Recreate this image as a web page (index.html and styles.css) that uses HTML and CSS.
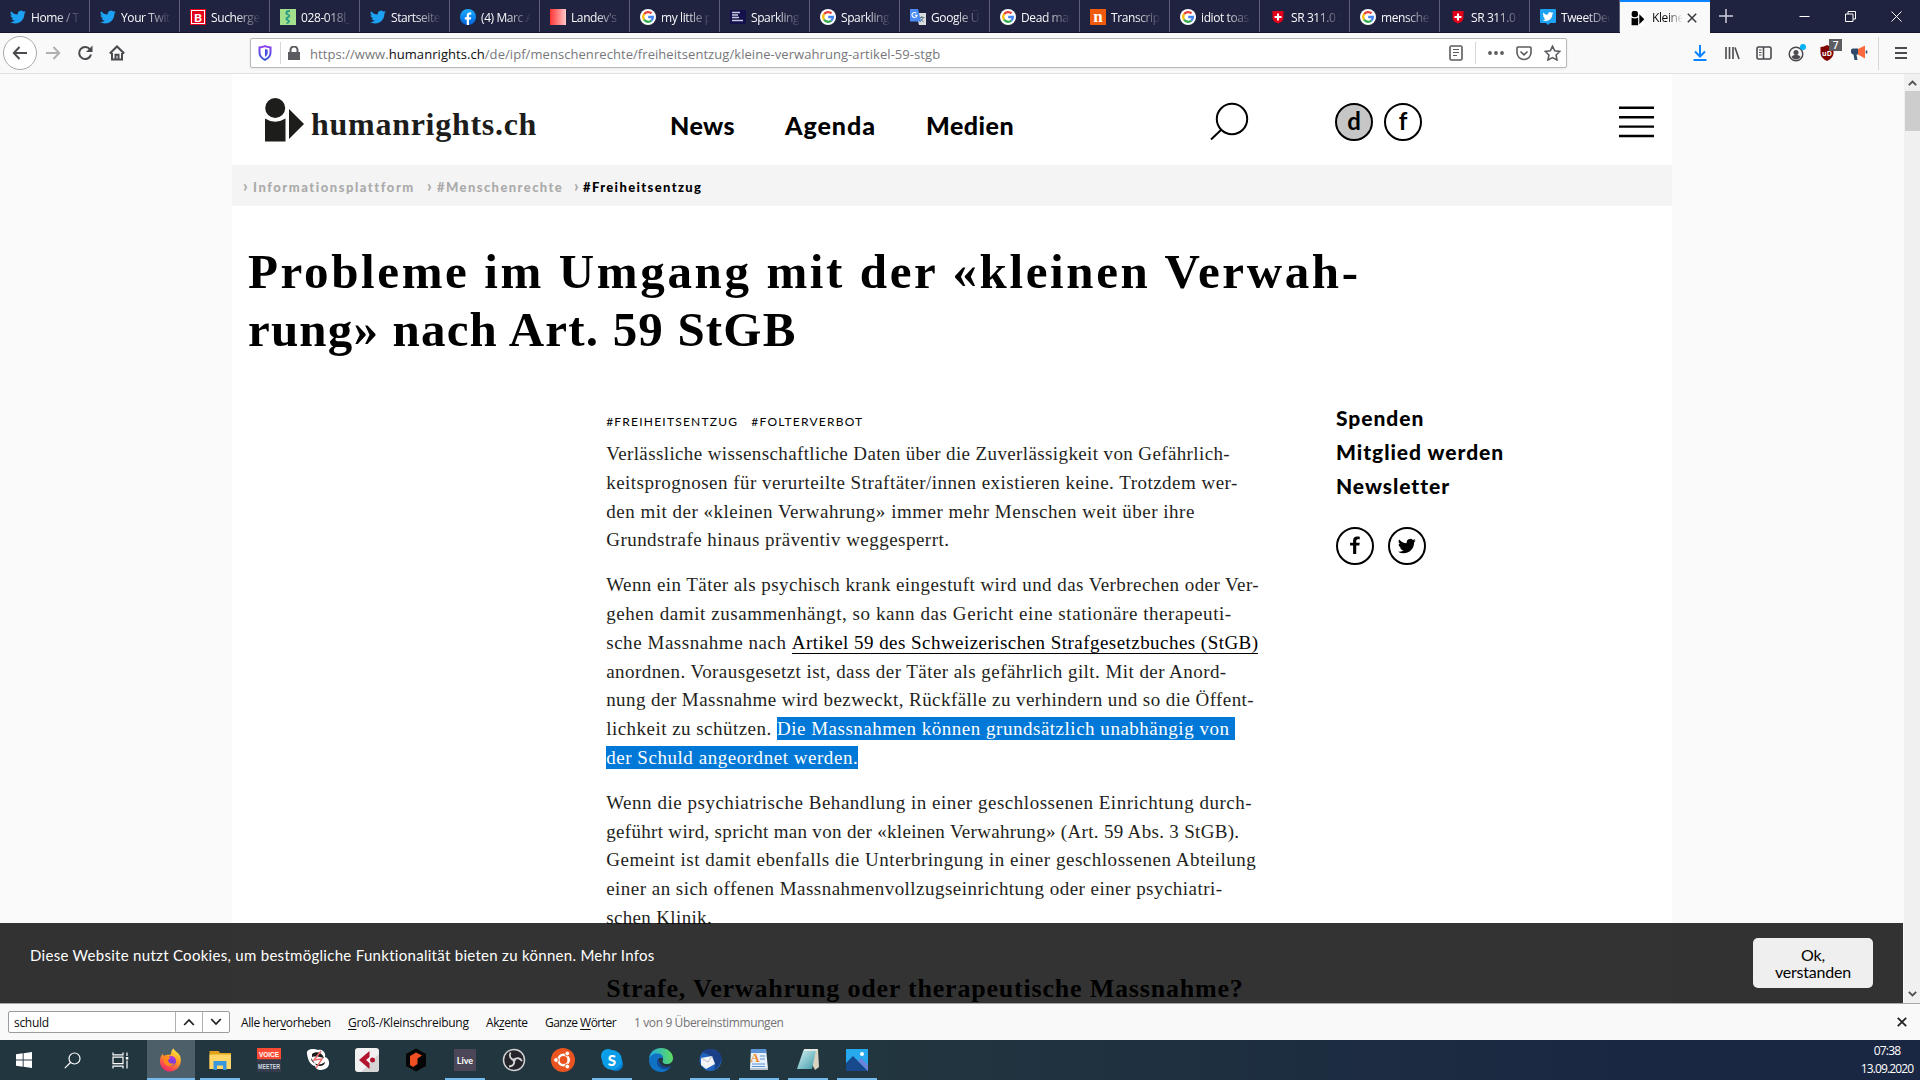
FILE: index.html
```html
<!DOCTYPE html>
<html lang="de">
<head>
<meta charset="utf-8">
<title>Kleine Verwahrung – humanrights.ch</title>
<link rel="stylesheet" href="styles.css">
</head>
<body>
<svg class="defs" width="0" height="0">
  <defs>
    <linearGradient id="ff" x1="0.8" y1="0" x2="0.3" y2="1"><stop offset="0" stop-color="#fff14a"/><stop offset=".45" stop-color="#ff9a1f"/><stop offset="1" stop-color="#f5226a"/></linearGradient>
    <linearGradient id="ffp" x1="0" y1="0" x2="0" y2="1"><stop offset="0" stop-color="#b237e8"/><stop offset="1" stop-color="#5a3fd6"/></linearGradient>
    <linearGradient id="shield" x1="0" y1="0" x2="0" y2="1"><stop offset="0" stop-color="#8b3ff0"/><stop offset="1" stop-color="#3558d8"/></linearGradient>
    <linearGradient id="red" x1="0" x2="1"><stop offset="0" stop-color="#ff3434"/><stop offset="1" stop-color="#ffc9c9"/></linearGradient>
    <linearGradient id="fb" x1="0" y1="0" x2="0" y2="1"><stop offset="0" stop-color="#18acfe"/><stop offset="1" stop-color="#0163e0"/></linearGradient>
    <linearGradient id="edge" x1="0" y1="0.3" x2="1" y2="0.2"><stop offset="0" stop-color="#1fa7e6"/><stop offset="1" stop-color="#62df5c"/></linearGradient>
    <linearGradient id="note" x1="0" y1="0" x2="1" y2="1"><stop offset="0" stop-color="#d6f3f5"/><stop offset="1" stop-color="#3f9aa8"/></linearGradient>
  </defs>
  <symbol id="bird" viewBox="0 0 24 24"><path d="M23.6 4.6a9.500 9.500 0 0 1-2.700.8 4.800 4.800 0 0 0 2.100-2.700c-.9.500-2 .9-3.100 1.200a4.900 4.900 0 0 0-8.300 4.400C7.600 8.100 4 6.200 1.600 3.200a4.900 4.900 0 0 0 1.500 6.500c-.8 0-1.500-.2-2.200-.6v.1a4.900 4.900 0 0 0 3.900 4.800c-.7.200-1.500.2-2.200.1a4.900 4.900 0 0 0 4.600 3.400A9.900 9.900 0 0 1 0 19.500a13.900 13.900 0 0 0 7.500 2.200c9 0 14-7.500 14-14v-.6c.9-.7 1.500-1.500 2.100-2.500z"/></symbol>
  <symbol id="google" viewBox="0 0 16 16"><circle cx="8" cy="8" r="8" fill="#fff"/><g fill="none" stroke-width="2.300"><path d="M4.100 5.200A4.900 4.900 0 0 1 11.500 4.400" stroke="#ea4335"/><path d="M4.100 10.700a4.900 4.900 0 0 1 0-5.500" stroke="#fbbc05"/><path d="M11.300 11.600a4.900 4.900 0 0 1-7.200-.9" stroke="#34a853"/><path d="M8.200 8h4.700a4.900 4.900 0 0 1-1.600 3.600" stroke="#4285f4"/></g></symbol>
  <symbol id="swiss" viewBox="0 0 16 16"><path d="M2.500 2h11v6.500c0 3-2.500 4.900-5.500 6-3-1.100-5.500-3-5.500-6z" fill="#e2001a"/><path d="M7 4.500h2V7h2.500v2H9v2.500H7V9H4.500V7H7z" fill="#fff"/></symbol>
  <symbol id="person" viewBox="0 0 40 64"><circle cx="10.200" cy="10" r="10"/><path d="M0 20.500Q10 27 20.500 20.500V43.500H0z"/><path d="M24 11 39 26 24 41z"/></symbol>
  <symbol id="fglyph" viewBox="0 0 12 20"><path d="M4 19v-9H.8V7H4V5c0-3 1.600-4.400 4.200-4.400 1 0 2 .1 2.800.2v2.700H9.400C8 3.500 7.300 4.200 7.300 5.400V7H11l-.5 3H7.300v9z"/></symbol>
</svg>

<div class="screen">
  <div class="tabs">
    <div class="tab"><svg class="fav blue"><use href="#bird"/></svg><span>Home / Tw</span></div>
    <div class="tab"><svg class="fav blue"><use href="#bird"/></svg><span>Your Twitt</span></div>
    <div class="tab"><svg class="fav" viewBox="0 0 16 16"><rect width="16" height="16" fill="#e2001a"/><rect x="1.500" y="1.500" width="13" height="13" fill="none" stroke="#fff"/><text x="8" y="12.500" text-anchor="middle" class="fav-b">B</text></svg><span>Suchergeb</span></div>
    <div class="tab"><svg class="fav" viewBox="0 0 16 16"><rect width="16" height="16" fill="#a3e08b"/><path d="M10 2C5 2 6 5 8 5.500S10 8 7.500 8.500 7 11 8.500 11.500 8 14 6.500 14.500" fill="none" stroke="#289b86" stroke-width="1.800"/></svg><span>028-018l_S</span></div>
    <div class="tab"><svg class="fav blue"><use href="#bird"/></svg><span>Startseite</span></div>
    <div class="tab"><svg class="fav" viewBox="0 0 16 16"><circle cx="8" cy="8" r="8" fill="url(#fb)"/><path d="M6.700 16v-5.500H4.800V8.200h1.900V6.600c0-2.200 1.300-3.200 3-3.200l1.600.1v2h-1C9.200 5.500 9 6 9 6.800v1.400h2.200l-.4 2.300H9V16z" fill="#fff"/></svg><span>(4) Marc A</span></div>
    <div class="tab"><svg class="fav" viewBox="0 0 16 16"><rect width="16" height="16" fill="url(#red)"/></svg><span>Landev's</span></div>
    <div class="tab"><svg class="fav"><use href="#google"/></svg><span>my little p</span></div>
    <div class="tab"><svg class="fav" viewBox="0 0 16 16"><rect y="1" width="16" height="14" fill="#12114c"/><path d="M2 3.500h8M2 6h6M2 8.500h7M2 11.500h11" stroke="#c9c8e0" stroke-width="1.500"/></svg><span>Sparkling</span></div>
    <div class="tab"><svg class="fav"><use href="#google"/></svg><span>Sparkling</span></div>
    <div class="tab"><svg class="fav" viewBox="0 0 16 16"><path d="M6 4h10v12H9z" fill="#dcdcdc"/><path d="M9 8.500h5.500M11.800 7v1.500M10 13l3.500-4.500M10.500 9.500l3 3.500" stroke="#607d8b" fill="none"/><path d="M0 0h8l3 12.500H0z" fill="#4a8af4"/><path d="M6.300 4.200A2.500 2.500 0 1 0 7 6.300H4.800" fill="none" stroke="#fff" stroke-width="1.100"/></svg><span>Google Üb</span></div>
    <div class="tab"><svg class="fav"><use href="#google"/></svg><span>Dead man</span></div>
    <div class="tab"><svg class="fav" viewBox="0 0 16 16"><rect width="16" height="16" fill="#f15a0a"/><text x="8" y="13" text-anchor="middle" class="fav-n">n</text></svg><span>Transcript</span></div>
    <div class="tab"><svg class="fav"><use href="#google"/></svg><span>idiot toast</span></div>
    <div class="tab"><svg class="fav"><use href="#swiss"/></svg><span>SR 311.0 S</span></div>
    <div class="tab"><svg class="fav"><use href="#google"/></svg><span>menschen</span></div>
    <div class="tab"><svg class="fav"><use href="#swiss"/></svg><span>SR 311.0 S</span></div>
    <div class="tab"><svg class="fav" viewBox="0 0 16 16"><path d="M1 0h14q1 0 1 1v12q0 1-1 1h-5l-2 2-2-2H1q-1 0-1-1V1q0-1 1-1z" fill="#1da1f2"/><use href="#bird" x="2.500" y="2" width="11" height="11" fill="#fff"/></svg><span>TweetDeck</span></div>
    <div class="tab active"><svg class="fav" viewBox="-1 -2 42 48"><rect x="-1" y="-2" width="42" height="48" fill="#fff"/><use href="#person" width="40" height="64"/></svg><span>Kleine</span><svg class="tab-x" viewBox="0 0 10 10"><path d="M.8.8l8.400 8.400M9.200.8.8 9.200"/></svg></div>
    <svg class="plus" viewBox="0 0 14 14"><path d="M7 0v14M0 7h14"/></svg>
    <div class="winbtns">
      <svg viewBox="0 0 11 11"><path d="M.5 5.500h10"/></svg>
      <svg viewBox="0 0 11 11"><path d="M.5 3h7.500v7.500H.5zM3 3V.5h7.500V8H8"/></svg>
      <svg viewBox="0 0 11 11"><path d="M.5.500l10 10M10.500.500l-10 10"/></svg>
    </div>
  </div>

  <div class="navbar">
    <div class="navbtns">
      <div class="back"><svg width="16" height="16" viewBox="0 0 16 16"><path d="M15 8H2M7.500 2 1.800 8l5.700 6"/></svg></div>
      <svg class="dim" width="16" height="16" viewBox="0 0 16 16"><path d="M1 8h13M8.500 2l5.700 6-5.700 6"/></svg>
      <svg width="16" height="16" viewBox="0 0 16 16"><path d="M13 4.500A6 6 0 1 0 14 9.500"/><path d="M15.500.500V7H9z" fill="#4a4a4f" stroke="none"/></svg>
      <svg width="16" height="16" viewBox="0 0 16 16"><path d="M.8 8.500 8 1.500l7.200 7M3 8v6.500h10V8M6.500 14.500V9.800h3v4.700" /></svg>
    </div>
    <div class="urlbar">
      <svg class="shield" width="14" height="16" viewBox="0 0 14 16"><path d="M7 1.200c2 .9 3.800 1.100 5.500 1.300v5c0 3.500-2.300 5.800-5.500 7.300C3.800 13.300 1.500 11 1.500 7.500v-5C3.200 2.300 5 2.100 7 1.200z"/><path class="half" d="M7 4v8c1.800-1.200 2.700-2.500 2.700-4.500V4.700z"/></svg>
      <i class="sep"></i>
      <svg class="lock" width="12" height="14" viewBox="0 0 12 14"><path d="M0 6h12v8H0z" fill="#5c5c60"/><path d="M2.500 7V4a3.500 3.500 0 0 1 7 0v3" fill="none" stroke="#5c5c60" stroke-width="2"/></svg>
      <span class="url">https://www.<b>humanrights.ch</b>/de/ipf/menschenrechte/freiheitsentzug/kleine-verwahrung-artikel-59-stgb</span>
      <svg class="reader" width="14" height="16" viewBox="0 0 14 16"><rect x="1" y="1" width="12" height="14" rx="1.500"/><path d="M4 4.500h6M4 7.500h6M4 10.500h4"/></svg>
      <i class="sep s2"></i>
      <svg class="dots" width="16" height="4" viewBox="0 0 16 4"><circle cx="2" cy="2" r="1.900"/><circle cx="8" cy="2" r="1.900"/><circle cx="14" cy="2" r="1.900"/></svg>
      <svg class="pocket" width="16" height="15" viewBox="0 0 16 15"><path d="M2 1h12q1 0 1 1v4.500a7 7 0 0 1-14 0V2q0-1 1-1zM4.500 5.500 8 8.800l3.500-3.300"/></svg>
      <svg class="star" width="17" height="16" viewBox="0 0 17 16"><path d="M8.500 1.200l2.200 4.600 5 .7-3.600 3.500.9 5-4.500-2.400L4 15l.9-5L1.300 6.500l5-.7z"/></svg>
    </div>
    <div class="tools">
      <svg width="16" height="16" viewBox="0 0 16 16" class="dl"><path d="M8 0v11M3 6.500l5 5 5-5M1.500 15h13"/></svg>
      <svg width="16" height="16" viewBox="0 0 16 16"><path d="M2 2v12M5.500 2v12M9 2v12M11 2.500l4 11.500"/></svg>
      <svg width="16" height="16" viewBox="0 0 16 16"><rect x="1" y="2" width="14" height="12" rx="1.500"/><path d="M7.500 2v12"/><path d="M3 5h2.500M3 7.500h2.500M3 10h2.500" stroke-width="1"/></svg>
      <svg width="18" height="18" viewBox="0 0 18 18"><circle cx="8" cy="10" r="6.800" stroke-width="1.500"/><circle cx="8" cy="8.500" r="2.500" fill="#4a4a4f" stroke="none"/><path d="M3.500 13c2-3 7-3 9 0-2 3.200-7 3.200-9 0z" fill="#4a4a4f" stroke="none"/><circle cx="15" cy="3" r="3" fill="#00b3f4" stroke="none"/></svg>
      <div class="ublock"><svg width="16" height="16" viewBox="0 0 16 16"><path d="M8 0c2 1.300 4 2 6.500 2v5.500c0 4-2.500 6.500-6.500 8.500-4-2-6.500-4.500-6.500-8.500V2C4 2 6 1.300 8 0z" fill="#800000" stroke="none"/><text x="8" y="10.500" text-anchor="middle">uD</text></svg><b>7</b></div>
      <svg width="17" height="16" viewBox="0 0 17 16"><path d="M0 5q0-1.500 2-1.500h5v6H5.500L6.500 15h-3L2.500 9.500Q0 9 0 7z" fill="#2f4a68" stroke="none"/><path d="M7 4l7-3.500v13L7 9.500z" fill="#ff6a3c" stroke="none"/><path d="M15.500 5.500v3" stroke="#2f4a68"/></svg>
      <i class="sep s3"></i>
      <svg width="14" height="14" viewBox="0 0 14 14" class="menu"><path d="M1 2h12M1 7h12M1 12h12"/></svg>
    </div>
  </div>

  <div class="view">
    <div class="canvas">
      <div class="page">
        <header class="site-head">
          <div class="logo"><svg width="40" height="64" viewBox="0 0 40 64"><use href="#person" fill="#1d1d1b"/></svg><span>humanrights.ch</span></div>
          <nav><a class="n1">News</a><a class="n2">Agenda</a><a class="n3">Medien</a></nav>
          <svg class="search" width="40" height="40" viewBox="0 0 40 40"><circle cx="23" cy="18" r="15.200"/><path d="M12.500 28.500 2 38.500"/></svg>
          <div class="langs"><span class="on">d</span><span>f</span></div>
          <svg class="burger" width="35" height="32" viewBox="0 0 35 32"><path d="M0 1.800h35M0 11.200h35M0 20.600h35M0 30h35"/></svg>
        </header>
        <div class="crumbs"><i>›</i><a class="c1">Informationsplattform</a><i>›</i><a class="c2">#Menschenrechte</a><i>›</i><a class="c3">#Freiheitsentzug</a></div>
        <h1><span class="t1">Probleme im Umgang mit der «kleinen Verwah-</span><span class="t2">rung» nach Art. 59 StGB</span></h1>
        <div class="columns">
          <article>
            <div class="tags"><span>#FREIHEITSENTZUG</span><span>#FOLTERVERBOT</span></div>
            <p><span class="l1">Verlässliche wissenschaftliche Daten über die Zuverlässigkeit von Gefährlich-</span><span class="l2">keitsprognosen für verurteilte Straftäter/innen existieren keine. Trotzdem wer-</span><span class="l3">den mit der «kleinen Verwahrung» immer mehr Menschen weit über ihre</span><span class="l4">Grundstrafe hinaus präventiv weggesperrt.</span></p>
            <p><span class="l5">Wenn ein Täter als psychisch krank eingestuft wird und das Verbrechen oder Ver-</span><span class="l6">gehen damit zusammenhängt, so kann das Gericht eine stationäre therapeuti-</span><span class="l7">sche Massnahme nach <a>Artikel 59 des Schweizerischen Strafgesetzbuches (StGB)</a></span><span class="l8">anordnen. Vorausgesetzt ist, dass der Täter als gefährlich gilt. Mit der Anord-</span><span class="l9">nung der Massnahme wird bezweckt, Rückfälle zu verhindern und so die Öffent-</span><span class="l10">lichkeit zu schützen. <mark>Die Massnahmen können grundsätzlich unabhängig von </mark></span><span class="l11"><mark>der Schuld angeordnet werden.</mark></span></p>
            <p><span class="l12">Wenn die psychiatrische Behandlung in einer geschlossenen Einrichtung durch-</span><span class="l13">geführt wird, spricht man von der «kleinen Verwahrung» (Art. 59 Abs. 3 StGB).</span><span class="l14">Gemeint ist damit ebenfalls die Unterbringung in einer geschlossenen Abteilung</span><span class="l15">einer an sich offenen Massnahmenvollzugseinrichtung oder einer psychiatri-</span><span class="l16">schen Klinik.</span></p>
            <h2>Strafe, Verwahrung oder therapeutische Massnahme?</h2>
          </article>
          <aside>
            <a>Spenden</a><a>Mitglied werden</a><a>Newsletter</a>
            <div class="social"><span><svg width="12" height="19"><use href="#fglyph"/></svg></span><span><svg width="18" height="18"><use href="#bird"/></svg></span></div>
          </aside>
        </div>
      </div>
      <div class="cookie"><span>Diese Website nutzt Cookies, um bestmögliche Funktionalität bieten zu können. Mehr Infos</span><button>Ok,<br>verstanden</button></div>
    </div>
    <div class="scroll"><svg width="9" height="6" viewBox="0 0 9 6"><path d="M.8 5.200 4.500 1.500l3.700 3.700"/></svg><i></i><svg width="9" height="6" viewBox="0 0 9 6"><path d="M.8.8l3.700 3.700L8.200.8"/></svg></div>
  </div>

  <div class="findbar">
    <div class="findbox"><span>schuld</span><div><svg width="12" height="8" viewBox="0 0 12 8"><path d="M1.200 7 6 2l4.800 5"/></svg></div><div><svg width="12" height="8" viewBox="0 0 12 8"><path d="M1.200 1 6 6l4.800-5"/></svg></div></div>
    <span class="f1">Alle her<u>v</u>orheben</span><span class="f2"><u>G</u>roß-/Kleinschreibung</span><span class="f3">Ak<u>z</u>ente</span><span class="f4">Ganze <u>W</u>örter</span><span class="f5">1 von 9 Übereinstimmungen</span>
    <svg class="fclose" width="10" height="10" viewBox="0 0 10 10"><path d="M.8.8l8.400 8.400M9.200.8.8 9.200"/></svg>
  </div>

  <div class="taskbar">
    <div class="sys"><svg width="16" height="16" viewBox="0 0 16 16"><path d="M0 2.300 6.700 1.300v6.300H0zM7.600 1.200 16 0v7.600H7.600zM0 8.400h6.700v6.300L0 13.700zM7.600 8.400H16V16l-8.400-1.200z" fill="#fff"/></svg></div>
    <div class="sys"><svg width="17" height="17" viewBox="0 0 17 17" class="line"><circle cx="10.500" cy="6.500" r="5.500"/><path d="M6.500 10.500.8 16.200"/></svg></div>
    <div class="sys"><svg width="17" height="17" viewBox="0 0 17 17" class="line"><path d="M1 .500v2.300h10V.5M1 16.500v-2.300h10v2.300M1 5.200h10v6.500H1zM15 .5v3.500M15 8.500v8"/><path d="M13.800 5h2.500v2.500h-2.500z" fill="#fff" stroke="none"/></svg></div>
    <div class="app cur run"><svg viewBox="0 0 24 24"><path d="M14.500.5c1 2.500 4.500 4 6 6.500 4 7-1 16-8.500 16.500C5 24 .5 18 1 12c.2-2.500 1.200-4.500 3-6.500 0 1.500.5 2 1.500 2.500C7 6 9 7 12 6.500 12 4 12.500 2 14.500.5z" fill="url(#ff)"/><circle cx="12" cy="13" r="5" fill="url(#ffp)"/><path d="M5 8c2.500-1.500 4.500 0 6.500 1.500L9 12c0 3 3 4.500 6.500 3-2 4-9 4-10.500-1z" fill="#ff8a1c"/></svg></div>
    <div class="app run"><svg viewBox="0 0 24 24"><path d="M1.500 3h9l1.500 2H23v16H1.500z" fill="#e2a31a"/><path d="M1.500 6.500H23V21H1.500z" fill="#ffd667"/><path d="M5.500 13h13v9h-3.500v-4.500H9V22H5.500z" fill="#3a96dd"/></svg></div>
    <div class="app"><svg viewBox="0 0 24 24"><rect width="24" height="11.500" fill="#fb4b35"/><rect y="11.500" width="24" height="12.500" fill="#343c4c"/><text x="12" y="8.600" class="vm" fill="#fff" textLength="20" lengthAdjust="spacingAndGlyphs">VOICE</text><text x="12" y="20.600" class="vm" fill="#ccd5de" textLength="22" lengthAdjust="spacingAndGlyphs">MEETER</text></svg></div>
    <div class="app"><svg viewBox="0 0 24 24"><path d="M1 6C0 1 7 0 12 2c5-1 8 3 7 7 5 1 6 10 0 12-5 2-9 1-10-3C4 17 2 12 1 6z" fill="#fff"/><path d="M5 10c0 5 8 9 14 4 0 4-6 5-9 3zM6 6c4-3 10-2 12 4-4-1-8-2-12-1z" fill="#1d1d1d"/><path d="M15 3 8 12l8-1-6 9" fill="none" stroke="#e96f6f" stroke-width="1.500"/></svg></div>
    <div class="app"><svg viewBox="0 0 24 24"><rect width="24" height="24" rx="3" fill="#f1f1f1"/><path d="M24 6v15q0 3-3 3H6z" fill="#d5d5d5"/><path d="M14.500 3v6L11 12l3.500 3v6L4 12z" fill="#b2142f"/><circle cx="17.500" cy="12" r="2.500" fill="#b2142f"/></svg></div>
    <div class="app"><svg viewBox="0 0 24 24"><path d="M12 .5 22 6v12l-10 5.500L2 18V6z" fill="#050505"/><path d="M6 8l6-3.500 6 3-4.500 3V16L9 19l-3-2z" fill="#f04e23"/></svg></div>
    <div class="app run"><svg viewBox="0 0 24 24"><rect x="1" y="1" width="22" height="22" fill="#4b4759"/><text x="12" y="15.500" class="live">Live</text></svg></div>
    <div class="app"><svg viewBox="0 0 24 24"><circle cx="12" cy="12" r="10.500" fill="#25242a" stroke="#d0d0d0" stroke-width="1.500"/><g fill="none" stroke="#d5d5d5" stroke-width="1.800"><path d="M12 12c-4-1-5-4-3.500-7.500M12 12c3-3 6-2 8 1M12 12c1 4-1 6-5 6.500"/></g><circle cx="12" cy="12" r="1.800" fill="#d5d5d5"/></svg></div>
    <div class="app"><svg viewBox="0 0 24 24"><circle cx="12" cy="12" r="12" fill="#e95420"/><circle cx="12.500" cy="12" r="5.200" fill="none" stroke="#fff" stroke-width="2.600"/><g fill="#fff" stroke="#e95420"><circle cx="5" cy="12" r="2.400"/><circle cx="16.300" cy="5.500" r="2.400"/><circle cx="16.300" cy="18.500" r="2.400"/></g></svg></div>
    <div class="app run"><svg viewBox="0 0 24 24"><circle cx="8" cy="8" r="7" fill="#0aa5ea"/><circle cx="16" cy="16" r="7" fill="#087fd6"/><circle cx="12" cy="12" r="10" fill="#0b9de8"/><text x="12" y="17.500" class="skype">S</text></svg></div>
    <div class="app"><svg viewBox="0 0 24 24"><path d="M0 12C0 4 6 0 12 0c7 0 12 5 12 10 0 4-3 6-6 6-4 0-5-2-4-4 1-3-2-6-6-6-4 0-7 3-8 6z" fill="url(#edge)"/><path d="M0 12c1-4 4-6.500 8-6.500 4 0 6 2 6 5C10 8 7 12 9 16c2 4 8 5 13 2-2 4-6 6-10 6C5 24 0 19 0 12z" fill="#0f72c4"/><path d="M9.500 10.500c-4 4 0 11 7 10.800 2-.1 4-1 5.300-3C18 20 10 19 9.500 10.500z" fill="#134a96"/></svg></div>
    <div class="app run"><svg viewBox="0 0 24 24"><circle cx="12.500" cy="12" r="11" fill="#1f63bd"/><path d="M4 4c5-5 16-4 19 4 1 6-2 11-7 14 3-7 0-14-12-18z" fill="#1b3f86"/><path d="M3 10l11-2 3 8-9 5-5-4z" fill="#f4f4f6"/><path d="M3 10l7 4 4-6" fill="none" stroke="#b9bdc9"/></svg></div>
    <div class="app run"><svg viewBox="0 0 24 24"><path d="M4 1h15l2 20H3z" fill="#e8f0fa"/><path d="M4 1h15l.3 4H3.800z" fill="#5b93d6"/><path d="M13 8h5M13 11h5M5 16h13M5 18.500h13" stroke="#5b93d6"/><text x="8" y="14" class="wp">A</text><path d="M3 20h18v2H3z" fill="#b9c4cf"/></svg></div>
    <div class="app run"><svg viewBox="0 0 24 24"><path d="M8 1h14l1 18-4 3z" fill="#d9d4c0"/><path d="M7.500 2H20l-4 19H1z" fill="url(#note)"/><path d="M8 2h13" stroke="#eee" stroke-width="1.500"/></svg></div>
    <div class="app run"><svg viewBox="0 0 24 24"><rect x="1" y="1" width="22" height="22" fill="#27a9ee"/><path d="M1 15 8 8l15 15H1z" fill="#174a8c"/><path d="M13 13l3-3 7 7v6z" fill="#6b83d8"/><circle cx="17" cy="6" r="2" fill="#fff"/></svg></div>
    <div class="clock"><span>07:38</span><span>13.09.2020</span></div>
  </div>
</div>
</body>
</html>
```
FILE: styles.css
```css
* { box-sizing: border-box; }
body { margin: 0; font-family: "Open Sans", "Noto Sans", sans-serif; }
svg { display: block; flex: none; }
i { font-style: normal; }
.defs { position: absolute; }
.screen { width: 1920px; height: 1080px; display: flex; flex-direction: column; overflow: hidden; }

/* tab strip */
.tabs { height: 33px; flex: none; background: #202340; display: flex; align-items: center; border-bottom: 1px solid #15172c; }
.tab { width: 90px; height: 32px; flex: none; padding: 2px 9px 0 10px; display: flex; align-items: center; gap: 5px; border-right: 1px solid #5d5f76; color: #f9f9fa; font-size: 12px; letter-spacing: -0.4px; }
.fav { width: 16px; height: 16px; }
.blue { fill: #1da1f2; }
.fav-b { font: 900 12px Lato, sans-serif; fill: #fff; letter-spacing: 0; }
.fav-n { font: bold 17px "Liberation Serif", serif; fill: #fff; letter-spacing: 0; }
.tab span { flex: 1; min-width: 0; overflow: hidden; white-space: nowrap; -webkit-mask-image: linear-gradient(90deg, #000 50%, transparent 102%); mask-image: linear-gradient(90deg, #000 50%, transparent 102%); }
.tab.active { background: #f9f9fa; color: #0c0c0d; height: 33px; margin-bottom: -1px; padding-top: 0; border-top: 2px solid #0a84ff; border-right: 0; padding-right: 13px; }
.tab.active span { margin-left: 1px; }
.tab-x { width: 10px; height: 10px; fill: none; stroke: #38383d; stroke-width: 1.5; }
.plus { width: 14px; height: 14px; margin-left: 9px; stroke: #cfd0da; stroke-width: 1.5; }
.winbtns { margin-left: auto; padding-right: 18px; display: flex; gap: 35px; }
.winbtns svg { width: 11px; height: 11px; fill: none; stroke: #fff; stroke-width: 1; }

/* navigation toolbar */
.navbar { height: 41px; flex: none; background: #f9f9fa; border-bottom: 1px solid #e0e0e1; display: flex; align-items: center; }
.navbtns { width: 250px; padding-left: 3px; display: flex; align-items: center; gap: 16px; }
.navbtns svg { fill: none; stroke: #4a4a4f; stroke-width: 2; }
.navbtns .dim { stroke: #b1b1b3; margin-left: -8px; }
.back { width: 34px; height: 34px; border: 1px solid #a9a9ab; border-radius: 50%; background: #fff; display: grid; place-items: center; }
.urlbar { width: 1317px; height: 30px; background: #fff; border: 1px solid #b8b8ba; border-radius: 2px; box-shadow: 0 1px 3px #0001; display: flex; align-items: center; padding-left: 7px; }
.urlbar svg { fill: none; stroke: #5c5c60; stroke-width: 1.6; }
.urlbar .shield { stroke: url(#shield); stroke-width: 2; }
.shield .half { fill: #4550dc; stroke: none; }
.sep { width: 1px; height: 22px; background: #d7d7db; }
.shield + .sep { margin-left: 8px; }
.urlbar .lock { margin: 0 10px 1px 7px; stroke: none; }
.url { font-size: 13px; line-height: 18px; padding-top: 1px; letter-spacing: 0.06px; color: #77777b; flex: 1; white-space: nowrap; }
.url b { font-weight: 400; color: #0c0c0d; }
.reader path { stroke-width: 1; }
.s2 { margin: 0 12px; }
.urlbar .dots { fill: #5c5c60; stroke: none; margin-right: 12px; }
.pocket { margin-right: 12px; }
.star { margin-right: 5px; }
.tools { margin-left: auto; padding-right: 12px; display: flex; align-items: center; gap: 16px; }
.tools svg { fill: none; stroke: #4a4a4f; stroke-width: 1.6; }
.tools .dl { stroke: #0a84ff; stroke-width: 2; }
.tools .menu { stroke-width: 2; }
.s3 { height: 33px; margin: 0 -1px 0 -6px; }
.ublock { position: relative; margin-left: -3px; }
.ublock text { font: bold 7px "Open Sans", sans-serif; fill: #fff; stroke: none; }
.ublock b { position: absolute; left: 10px; top: -6px; width: 13px; height: 12px; background: #5d5d61; color: #fff; font-size: 10px; line-height: 12px; text-align: center; font-weight: 600; }

/* website */
.view { height: 929px; flex: none; display: flex; background: #fafafa; overflow: hidden; }
.canvas { position: relative; width: 1904px; height: 929px; overflow: hidden; }
.page { width: 1440px; height: 960px; margin: 0 auto; background: #fff; }
.site-head { height: 91px; display: flex; padding-left: 33px; }
.logo { display: flex; padding-top: 24px; width: 405px; }
.logo span { margin: 8px 0 0 6px; font: bold 32px/37px "Liberation Serif", serif; letter-spacing: 0.72px; color: #1d1d1b; }
.site-head nav { display: flex; width: 509px; padding-top: 36px; font: 900 25px/30px Lato, sans-serif; color: #000; }
.n1 { width: 115px; letter-spacing: 0.45px; }
.n2 { width: 141px; letter-spacing: 0.95px; }
.n3 { letter-spacing: 0.5px; }
.search { margin: 27px 0 0 30px; fill: none; stroke: #000; stroke-width: 2; }
.langs { display: flex; gap: 11px; margin: 29px 0 0 86px; }
.langs span { width: 38px; height: 38px; border: 2px solid #000; border-radius: 50%; font: bold 24px/32px Lato, sans-serif; text-align: center; }
.langs .on { background: #c6c6c6; }
.burger { margin: 32px 0 0 197px; stroke: #000; stroke-width: 2.4; }
.crumbs { height: 41px; background: #f4f4f4; padding: 9px 0 0 11px; display: flex; font: 900 13px/26px Lato, sans-serif; color: #ababab; letter-spacing: 1.42px; }
.crumbs i { width: 10px; font-size: 16px; line-height: 24px; letter-spacing: 0; }
.c1 { width: 174px; letter-spacing: 1.54px; }
.c2 { width: 137px; }
.c2 + i { width: 9px; }
.c3 { color: #000; letter-spacing: 1.38px; }
h1 { margin: 36.800px 0 0 16px; font: bold 49px/58px "Liberation Serif", serif; color: #000; }
h1 span, p span { display: block; white-space: nowrap; }
.t1 { letter-spacing: 2.62px; }
.t2 { letter-spacing: 1.18px; }
.columns { display: flex; padding-left: 374.200px; }
article { width: 729.800px; padding-top: 53.700px; }
.tags { height: 27.500px; display: flex; gap: 13px; font: 12px/20px Lato, sans-serif; letter-spacing: 1.22px; color: #000; }
p { margin: 0 0 16px; font: 19px/28.800px "Liberation Serif", serif; color: #1f1f21; letter-spacing: 0.47px; }
p a { color: #000; border-bottom: 1px solid #000; letter-spacing: 0.455px; }
mark { background: #0078d7; color: #fff; padding: 1px 0; letter-spacing: 0.513px; white-space: pre; }
.l1 { letter-spacing: 0.38px; }
.l2 { letter-spacing: 0.48px; }
.l3 { letter-spacing: 0.507px; }
.l5, .l9 { letter-spacing: 0.435px; }
.l6 { letter-spacing: 0.568px; }
.l7 { letter-spacing: 0.55px; }
.l8 { letter-spacing: 0.44px; }
.l11 mark { letter-spacing: 0.54px; }
.l12, .l14 { letter-spacing: 0.522px; }
.l13 { letter-spacing: 0.32px; }
.l16 { letter-spacing: 0.35px; }
h2 { margin: 40px 0 0; font: bold 26px/32px "Liberation Serif", serif; letter-spacing: 0.8px; color: #000; white-space: nowrap; }
aside { padding-top: 42.700px; }
aside a { display: block; font: 900 21px/34px Lato, sans-serif; letter-spacing: 0.95px; color: #000; }
.social { display: flex; gap: 14px; margin-top: 23.500px; }
.social span { width: 38px; height: 38px; border: 2px solid #000; border-radius: 50%; display: grid; place-items: center; }
.cookie { position: absolute; left: 0; bottom: 0; width: 1903px; height: 80px; background: rgba(0, 0, 0, 0.8); display: flex; justify-content: space-between; align-items: flex-start; padding: 15px 30px 0; font: 15px/34px Lato, sans-serif; letter-spacing: 0.29px; color: #fff; }
.cookie button { width: 120px; height: 50px; border: 0; border-radius: 5px; background: #efefef; font: 16px/17px Lato, sans-serif; letter-spacing: -0.2px; color: #000; padding: 0; }
.scroll { width: 16px; background: #f0f0f0; display: flex; flex-direction: column; align-items: center; padding: 6px 0; }
.scroll i { width: 15px; height: 40px; margin-top: 5px; margin-bottom: auto; background: #cdcdcd; }
.scroll svg { fill: none; stroke: #505050; stroke-width: 1.8; }

/* find bar */
.findbar { height: 37px; flex: none; background: #f9f9fa; border-top: 1px solid #a8a8a8; display: flex; align-items: center; padding-left: 8px; font-size: 12px; color: #0c0c0d; white-space: nowrap; }
.findbox { width: 222px; height: 22px; border: 1px solid #9c9c9e; background: #fff; display: flex; margin-right: 11px; border-radius: 2px; }
.findbox span { width: 167px; padding-left: 5px; line-height: 21px; letter-spacing: -0.3px; }
.findbox div { width: 27px; border-left: 1px solid #b1b1b3; display: grid; place-items: center; }
.findbar svg { fill: none; stroke: #222; stroke-width: 1.8; }
.findbar u { text-underline-offset: 2px; }
.f1 { width: 107px; letter-spacing: -0.41px; }
.f2 { width: 138px; letter-spacing: -0.26px; }
.f3 { width: 59px; letter-spacing: -0.44px; }
.f4 { width: 89px; letter-spacing: -0.53px; }
.f5 { letter-spacing: -0.38px; color: #737373; }
.fclose { margin: 0 13px 0 auto; }

/* taskbar */
.taskbar { height: 40px; flex: none; background: linear-gradient(90deg, #22363f 0, #22363f 45%, #1a2742 85%); display: flex; }
.sys { width: 48px; display: grid; place-items: center; }
.sys + .sys + .sys { width: 51px; padding-right: 3px; }
.line { fill: none; stroke: #fff; stroke-width: 1.2; }
.app { width: 40px; margin: 0 4.500px; display: grid; place-items: center; }
.app svg { width: 24px; height: 24px; }
.run { border-bottom: 2px solid #76b9ed; padding-top: 2px; }
.cur { width: 48px; margin: 0 .5px 0 0; background: #4d5f69; }
.app text { text-anchor: middle; }
.vm { font: bold 7px "Liberation Sans", sans-serif; }
.live { font: bold 9px Lato, sans-serif; fill: #fff; }
.skype { font: 900 15px Lato, sans-serif; fill: #fff; }
.wp { font: bold 13px "Liberation Serif", serif; fill: #f08a24; }
.clock { margin-left: auto; width: 66px; color: #fff; font-size: 12px; line-height: 18px; padding-top: 2px; display: flex; flex-direction: column; align-items: center; letter-spacing: -0.85px; }
```
